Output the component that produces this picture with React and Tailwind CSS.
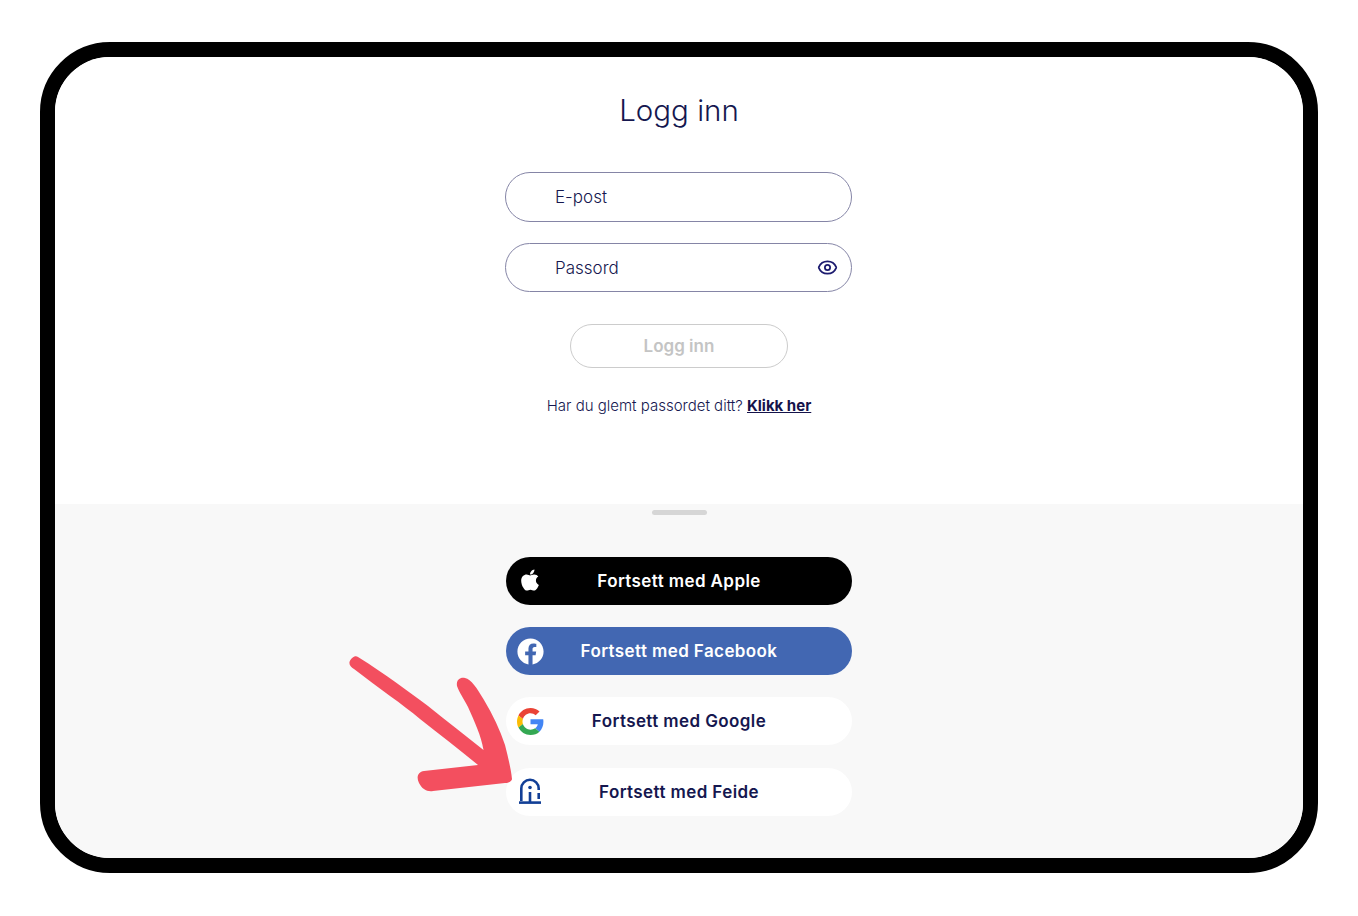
import React from 'react'
import { Eye } from 'lucide-react'
import { FaApple, FaFacebook } from 'react-icons/fa'

const GoogleIcon = () => (
  <svg viewBox="0 0 48 48" className="w-[27px] h-[27px] mt-px">
    <path fill="#EA4335" d="M24 9.5c3.54 0 6.71 1.22 9.21 3.6l6.85-6.85C35.9 2.38 30.47 0 24 0 14.62 0 6.51 5.38 2.56 13.22l7.98 6.19C12.43 13.72 17.74 9.5 24 9.5z" />
    <path fill="#4285F4" d="M46.98 24.55c0-1.57-.15-3.09-.38-4.55H24v9.02h12.94c-.58 2.96-2.26 5.48-4.78 7.18l7.73 6c4.51-4.18 7.09-10.36 7.09-17.65z" />
    <path fill="#FBBC05" d="M10.53 28.59c-.48-1.45-.76-2.99-.76-4.59s.27-3.14.76-4.59l-7.98-6.19C.92 16.46 0 20.12 0 24c0 3.88.92 7.54 2.56 10.78l7.97-6.19z" />
    <path fill="#34A853" d="M24 48c6.48 0 11.93-2.13 15.89-5.81l-7.73-6c-2.15 1.45-4.92 2.3-8.16 2.3-6.26 0-11.57-4.22-13.47-9.91l-7.98 6.19C6.51 42.62 14.62 48 24 48z" />
  </svg>
)

const FeideIcon = () => (
  <svg viewBox="0 0 22 26" className="w-[22px] h-[26px] -mt-[2px]" fill="none" stroke="#123f96" strokeWidth="2.6">
    <path d="M2.3 23V10.5a8.7 8.7 0 0 1 17.4 0V12" />
    <path d="M0 24.6h22" />
    <path d="M11 14V24" />
    <path d="M19.7 15v6" />
    <circle cx="11" cy="9.5" r="1.8" fill="#123f96" stroke="none" />
  </svg>
)

const Arrow = () => (
  <svg viewBox="0 0 190 155" className="absolute left-[340px] top-[645px] w-[190px] h-[155px] pointer-events-none">
    <path
      fill="#f34f5f"
      d="M9.5 17 C11 13 15 10 18 12 C45 29 68 46 88 61 C108 77 126 91 143.5 105 C141 90 135 78 128 62 C124 54 119 47 117 41 C116 35 120 32 125 33 C131 34 137 43 144 55 C153 70 160 85 165 100 C168 112 171 124 172 134 C172 136 169 138 165 138 L93 146 C87 147 82 144 79 138 C76 132 78 127 84 126 L138 120 C120 105 100 90 80 74 C62 59 40 44 14 24 C11 22 9 20 9.5 17 Z"
    />
  </svg>
)

const inkText = 'text-[#15174f]'

const SocialButton = ({ icon, label, className }) => (
  <button className={`relative w-[346px] h-[48px] rounded-[24px] flex items-center justify-center pt-[2px] text-[17px] tracking-[0.4px] font-semibold ${className}`}>
    <span className="absolute left-[10px] top-0 bottom-0 w-[28px] flex items-center justify-center">{icon}</span>
    {label}
  </button>
)

export default function App() {
  return (
    <div className="relative min-h-[916px] bg-white pt-[42px] px-[40px] font-['Inter',sans-serif]">
      <div className="w-[1278px] h-[831px] rounded-[70px] border-[15px] border-black overflow-hidden flex flex-col">
        {/* Login form */}
        <div className="h-[447px] bg-white flex flex-col items-center">
          <h1 className={`mt-[32px] h-[42px] text-[29.5px] leading-[42px] font-light ${inkText}`}>Logg inn</h1>
          <div className={`mt-[41px] mr-px w-[347px] h-[50px] rounded-[25px] border-[1.5px] border-[#8585a6] flex items-center pt-[2px] pl-[49px] text-[17px] font-light ${inkText}`}>
            E-post
          </div>
          <div className={`mt-[21px] mr-px w-[347px] h-[49px] rounded-[25px] border-[1.5px] border-[#8585a6] flex items-center justify-between pt-[2px] pl-[49px] pr-[13px] text-[17px] font-light ${inkText}`}>
            Passord
            <Eye size={21} strokeWidth={2} className="text-[#1c1b6f] -mt-[2px]" />
          </div>
          <button className="mt-[32px] w-[218px] h-[44px] rounded-[22px] border-[1.5px] border-[#cccccc] pt-[2px] text-[17px] font-semibold text-[#c4c4c4]">
            Logg inn
          </button>
          <p className={`mt-[28px] text-[15px] leading-[20px] font-light ${inkText}`}>
            Har du glemt passordet ditt?{' '}
            <a className="font-bold underline text-[#14134a]">Klikk her</a>
          </p>
        </div>

        {/* Social logins */}
        <div className="flex-1 bg-[#f8f8f8] flex flex-col items-center">
          <div className="mt-[6px] w-[55px] h-[5px] rounded-full bg-[#d6d6d6]" />
          <div className="mt-[42px] flex flex-col gap-[22px]">
            <SocialButton
              icon={<FaApple size={24} className="text-white -mt-[2px]" />}
              label="Fortsett med Apple"
              className="bg-black text-white"
            />
            <SocialButton
              icon={<FaFacebook size={27} className="text-white" />}
              label="Fortsett med Facebook"
              className="bg-[#4267b2] text-white"
            />
            <SocialButton icon={<GoogleIcon />} label="Fortsett med Google" className={`bg-white ${inkText}`} />
            <SocialButton icon={<FeideIcon />} label="Fortsett med Feide" className={`mt-px bg-white ${inkText}`} />
          </div>
        </div>
      </div>
      <Arrow />
    </div>
  )
}
